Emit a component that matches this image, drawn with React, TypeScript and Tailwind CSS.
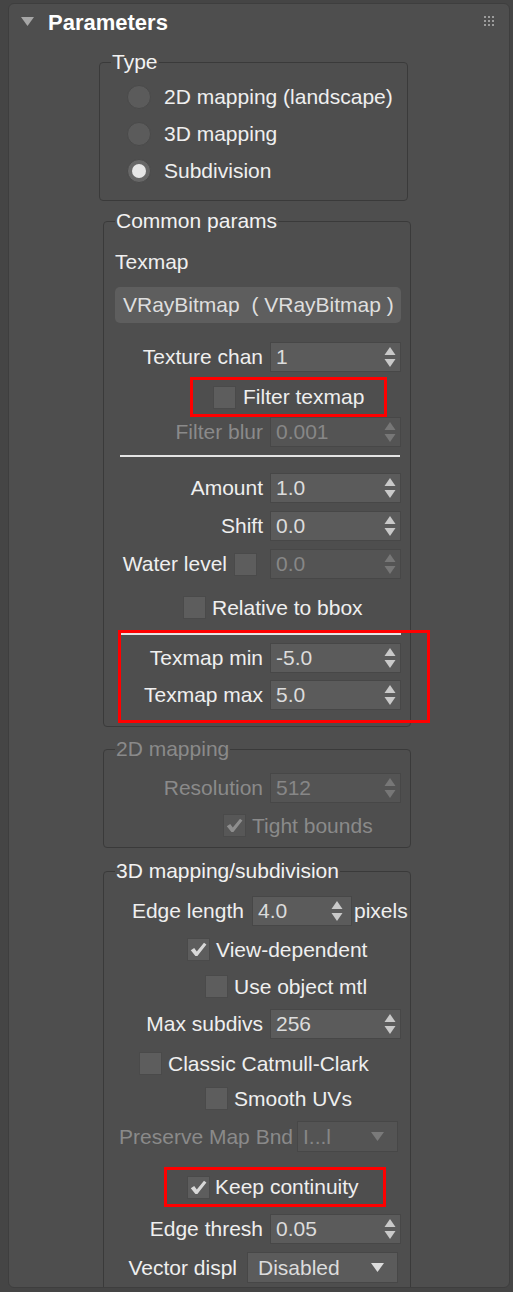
import React from 'react';

type Kids = { children?: React.ReactNode };

function Arrows({ dim }: { dim?: boolean }) {
  const c = dim ? '#777777' : '#c9c9c9';
  return (
    <svg width="12" height="20" viewBox="0 0 12 20" className="shrink-0">
      <path d="M6 0 L11.5 8 L0.5 8 Z" fill={c} />
      <path d="M0.5 12 L11.5 12 L6 20 Z" fill={c} />
    </svg>
  );
}

function Spinner({ value, dim, w = 'w-[131px]', pr = 'pr-[4px]' }: { value: string; dim?: boolean; w?: string; pr?: string }) {
  return (
    <div
      className={`${w} ${pr} h-[30px] shrink-0 flex items-center justify-between pl-[5px] border border-[#474747] ${
        dim ? 'bg-[#545454] text-[#878787]' : 'bg-[#5b5b5b] text-[#dcdcdc]'
      }`}
    >
      <span>{value}</span>
      <Arrows dim={dim} />
    </div>
  );
}

function Dropdown({ value, dim, w, pl }: { value: string; dim?: boolean; w: string; pl: string }) {
  return (
    <div
      className={`${w} ${pl} h-[31px] shrink-0 flex items-center justify-between pr-[13px] border border-[#474747] ${
        dim ? 'bg-[#545454] text-[#878787]' : 'bg-[#5b5b5b] text-[#dcdcdc]'
      }`}
    >
      <span>{value}</span>
      <svg width="13" height="9" viewBox="0 0 13 9">
        <path d="M0 0 H13 L6.5 9 Z" fill={dim ? '#7a7a7a' : '#dcdcdc'} />
      </svg>
    </div>
  );
}

function Check({ checked, dim }: { checked?: boolean; dim?: boolean }) {
  return (
    <div
      className={`w-[23px] h-[23px] shrink-0 flex items-center justify-center border border-[#4a4a4a] ${
        dim ? 'bg-[#575757]' : 'bg-[#5d5d5d]'
      }`}
    >
      {checked && (
        <svg width="17" height="15" viewBox="0 0 17 15">
          <path d="M0.8 8.2 L4.2 6 L6.8 9.6 L14 0.8 L16.4 2.6 L7.4 14 L5.4 14 Z" fill={dim ? '#8e8e8e' : '#d8d8d8'} />
        </svg>
      )}
    </div>
  );
}

function Radio({ on }: { on?: boolean }) {
  return (
    <div
      className={`w-[24px] h-[24px] shrink-0 rounded-full flex items-center justify-center border border-[#4a4a4a] ${
        on ? 'bg-[#676767]' : 'bg-[#5b5b5b]'
      }`}
    >
      {on && <div className="w-[14px] h-[14px] rounded-full bg-[#e6e6e6]" />}
    </div>
  );
}

function Field({ label, value, dim, className = '' }: { label: string; value: string; dim?: boolean; className?: string }) {
  return (
    <div className={`flex justify-end items-center gap-[7px] ${className}`}>
      <span className={dim ? 'text-[#8a8a8a]' : ''}>{label}</span>
      <Spinner value={value} dim={dim} />
    </div>
  );
}

function CheckRow({ label, checked, dim, className = '' }: { label: string; checked?: boolean; dim?: boolean; className?: string }) {
  return (
    <div className={`flex items-center gap-[6px] h-[23px] ${className}`}>
      <Check checked={checked} dim={dim} />
      <span className={dim ? 'text-[#8a8a8a]' : ''}>{label}</span>
    </div>
  );
}

// fieldset keeps the legend gap in the border; padding lives on the inner div
function Group({
  title,
  dim,
  className = '',
  legend = 'ml-[11px]',
  inner = '',
  children,
}: Kids & { title: string; dim?: boolean; className?: string; legend?: string; inner?: string }) {
  return (
    <fieldset className={`min-w-0 border border-[#3a3a3a] rounded-[4px] ${className}`}>
      <legend className={`${legend} px-[1px] leading-[24px] ${dim ? 'text-[#8a8a8a]' : 'text-[#f2f2f2]'}`}>{title}</legend>
      <div className={inner}>{children}</div>
    </fieldset>
  );
}

function Separator() {
  return <div className="h-[2px] w-[280px] bg-[#e4e4e4]" />;
}

export default function App() {
  return (
    <div className="w-[513px] h-[1292px] overflow-hidden bg-[#454545] pt-[3px] font-['Liberation_Sans',Arial,sans-serif] text-[21px] leading-[24px] text-[#efefef]">
      <div className="ml-[8px] w-[502px] h-[1285px] overflow-hidden rounded-[6px] border border-[#3e3e3e] bg-[#4e4e4e]">
        {/* header */}
        <div className="h-[38px] flex items-center pl-[12px] pr-[15px]">
          <svg width="13" height="9" viewBox="0 0 13 9" className="-mt-[3px]">
            <path d="M0 0 H13 L6.5 9 Z" fill="#a6a6a6" />
          </svg>
          <span className="ml-[14px] text-[22px] font-bold text-white">Parameters</span>
          <div className="ml-auto -mt-[4px] grid grid-cols-3 gap-[2px]">
            {Array.from({ length: 9 }).map((_, i) => (
              <div key={i} className="w-[2px] h-[2px] bg-[#9c9c9c]" />
            ))}
          </div>
        </div>

        {/* Type */}
        <Group title="Type" legend="ml-[11px]" className="ml-[90px] mt-[8px] w-[309px]" inner="pl-[27px] pt-[4px] pb-[11px]">
          {[
            ['2D mapping (landscape)', false],
            ['3D mapping', false],
            ['Subdivision', true],
          ].map(([t, on]) => (
            <div key={t as string} className="h-[37px] flex items-center gap-[13px]">
              <Radio on={on as boolean} />
              <span>{t as string}</span>
            </div>
          ))}
        </Group>

        {/* Common params */}
        <Group title="Common params" className="ml-[94px] mt-[8px] w-[308px]" inner="pl-[11px] pr-[9px] pb-[3px]">
          <div className="mt-[17px]">Texmap</div>
          <div className="mt-[13px] h-[36px] rounded-[5px] bg-[#5e5e5e] px-[8px] flex items-center text-[#dedede] whitespace-pre">
            VRayBitmap  ( VRayBitmap )
          </div>
          <Field label="Texture chan" value="1" className="mt-[19px]" />
          <div className="mt-[5px] ml-[75px] w-[197px] h-[40px] border-[3px] border-[#ff0000] flex items-center pl-[20px] gap-[7px]">
            <Check />
            <span>Filter texmap</span>
          </div>
          <Field label="Filter blur" value="0.001" dim />
          <div className="mt-[8px] ml-[5px]">
            <Separator />
          </div>
          <Field label="Amount" value="1.0" className="mt-[16px]" />
          <Field label="Shift" value="0.0" className="mt-[8px]" />
          <div className="mt-[8px] flex justify-end items-center">
            <span>Water level</span>
            <div className="ml-[7px]">
              <Check />
            </div>
            <div className="ml-[13px]">
              <Spinner value="0.0" dim />
            </div>
          </div>
          <CheckRow label="Relative to bbox" className="mt-[17px] ml-[68px]" />
          <div className="mt-[11px] ml-[3px] w-[312px] border-[3px] border-[#ff0000] pr-[26px] pb-[10px]">
            <Separator />
            <Field label="Texmap min" value="-5.0" className="mt-[8px]" />
            <Field label="Texmap max" value="5.0" className="mt-[7px]" />
          </div>
        </Group>

        {/* 2D mapping */}
        <Group title="2D mapping" dim className="ml-[94px] mt-[10px] w-[308px]" inner="pl-[11px] pr-[9px] pb-[10px]">
          <Field label="Resolution" value="512" dim className="mt-[12px]" />
          <CheckRow label="Tight bounds" checked dim className="mt-[11px] ml-[108px]" />
        </Group>

        {/* 3D mapping/subdivision */}
        <Group title="3D mapping/subdivision" className="ml-[94px] mt-[11px] w-[308px]" inner="pl-[11px] pr-[9px] pb-[10px]">
          <div className="mt-[13px] -mr-[8px] flex justify-end items-center">
            <span>Edge length</span>
            <div className="ml-[8px]">
              <Spinner value="4.0" w="w-[100px]" pr="pr-[8px]" />
            </div>
            <span className="ml-[2px] w-[55px] whitespace-nowrap">pixels</span>
          </div>
          <CheckRow label="View-dependent" checked className="mt-[12px] ml-[72px]" />
          <CheckRow label="Use object mtl" className="mt-[14px] ml-[90px]" />
          <Field label="Max subdivs" value="256" className="mt-[11px]" />
          <CheckRow label="Classic Catmull-Clark" className="mt-[13px] ml-[24px]" />
          <CheckRow label="Smooth UVs" className="mt-[12px] ml-[90px]" />
          <div className="mt-[11px] mr-[3px] flex justify-end items-center gap-[4px]">
            <span className="text-[#8a8a8a]">Preserve Map Bnd</span>
            <Dropdown value="I...l" dim w="w-[101px]" pl="pl-[5px]" />
          </div>
          <div className="mt-[15px] ml-[49px] w-[222px] h-[40px] border-[3px] border-[#ff0000] flex items-center pl-[20px] gap-[5px]">
            <Check checked />
            <span>Keep continuity</span>
          </div>
          <Field label="Edge thresh" value="0.05" className="mt-[7px]" />
          <div className="mt-[8px] mr-[3px] flex justify-end items-center gap-[10px]">
            <span>Vector displ</span>
            <Dropdown value="Disabled" w="w-[151px]" pl="pl-[10px]" />
          </div>
        </Group>
      </div>
    </div>
  );
}
